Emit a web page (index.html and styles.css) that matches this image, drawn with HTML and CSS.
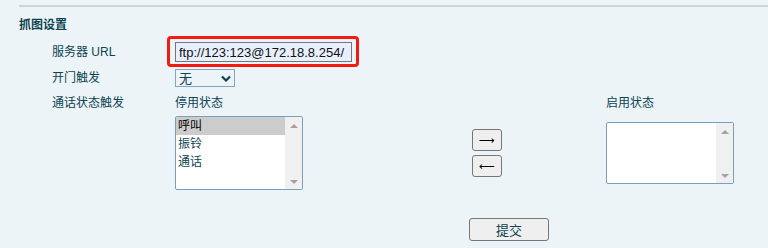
FILE: index.html
```html
<!DOCTYPE html>
<html lang="zh">
<head>
<meta charset="utf-8">
<link rel="stylesheet" href="styles.css">
</head>
<body>
<div class="section">
  <div class="topline"></div>
  <div class="title">抓图设置</div>
  <div class="form">
    <div class="row row-url">
      <div class="label">服务器 URL</div>
      <div class="ctrl">
        <span class="marked"><input class="text-input" type="text" value="ftp://123:123@172.18.8.254/"></span>
      </div>
    </div>
    <div class="row row-door">
      <div class="label">开门触发</div>
      <div class="ctrl">
        <span class="select-wrap">
          <select class="select"><option>无</option></select>
          <svg class="chev" width="10" height="7" viewBox="0 0 10 7"><path d="M1 1.5 L5 5.5 L9 1.5" fill="none" stroke="#103e52" stroke-width="2.2"/></svg>
        </span>
      </div>
    </div>
    <div class="trigger">
      <div class="label">通话状态触发</div>
      <div class="colhead">停用状态</div>
      <div></div>
      <div class="colhead">启用状态</div>

      <div></div>
      <div class="listbox lb-off">
        <div class="items">
          <div class="item sel">呼叫</div>
          <div class="item">振铃</div>
          <div class="item">通话</div>
        </div>
        <div class="sbar"><span class="up"></span><span class="down"></span></div>
      </div>
      <div class="arrows">
        <button class="btn arrow" type="button">⟶</button>
        <button class="btn arrow" type="button">⟵</button>
      </div>
      <div class="listbox lb-on">
        <div class="items"></div>
        <div class="sbar"><span class="up"></span><span class="down"></span></div>
      </div>
    </div>
    <div class="submit-row">
      <button class="btn submit" type="button">提交</button>
    </div>
  </div>
</div>
</body>
</html>
```
FILE: styles.css
```css
html, body {
  margin: 0;
  padding: 0;
}
body {
  background: #ecf4f7;
  color: #0d4352;
  font-family: "Liberation Sans", "Noto Sans CJK SC", sans-serif;
  font-size: 12px;
  width: 768px;
  height: 248px;
  overflow: hidden;
}
.section {
  padding-left: 19px;
}
.topline {
  margin-top: 5px;
  height: 2px;
  background: #d3d3d5;
}
.title {
  margin-top: 10px;
  font-weight: bold;
  line-height: 16px;
  height: 16px;
}
.form {
  padding-left: 33px;
}
.row {
  display: grid;
  grid-template-columns: 123px auto;
  align-items: center;
}
.label {
  line-height: 16px;
}
.row-url {
  margin-top: 9px;
  height: 20px;
}
.marked {
  position: relative;
  display: inline-block;
  height: 20px;
}
.marked::after {
  content: "";
  position: absolute;
  left: -8px;
  top: -6px;
  right: -7px;
  bottom: -5px;
  border: 3px solid #f21b12;
  border-radius: 4px;
  pointer-events: none;
}
.text-input {
  box-sizing: border-box;
  width: 177px;
  height: 20px;
  margin: 0;
  padding: 0 3px;
  border: 1px solid #767676;
  background: #e8f0fe;
  color: #111;
  font-family: "Liberation Sans", sans-serif;
  font-size: 13px;
  outline: none;
}
.row-door {
  margin-top: 7px;
  height: 18px;
}
.select-wrap {
  position: relative;
  display: inline-block;
  height: 18px;
}
.select {
  box-sizing: border-box;
  width: 60px;
  height: 18px;
  margin: 0;
  padding: 0 0 0 3px;
  border: 1px solid #7ea7c2;
  border-radius: 0;
  background: #ecf4f7;
  color: #0d4352;
  font-family: "Liberation Sans", "Noto Sans CJK SC", sans-serif;
  font-size: 13px;
  -webkit-appearance: none;
  appearance: none;
  display: block;
}
.chev {
  position: absolute;
  left: 46px;
  top: 6px;
  pointer-events: none;
}
.trigger {
  margin-top: 8px;
  display: grid;
  grid-template-columns: 123px 297px 134px 128px;
  grid-template-rows: 16px auto;
  row-gap: 5px;
  align-items: start;
}
.colhead {
  line-height: 16px;
}
.listbox {
  box-sizing: border-box;
  width: 128px;
  border: 1px solid #7a9fbd;
  border-radius: 2px;
  background: #fff;
  display: flex;
}
.lb-off {
  height: 74px;
}
.lb-on {
  height: 62px;
  margin-top: 6px;
}
.items {
  flex: 1;
}
.item {
  height: 18px;
  line-height: 18px;
  padding-left: 2px;
  font-size: 12px;
}
.item.sel {
  background: #cccccc;
  color: #000;
}
.sbar {
  width: 17px;
  background: #f0f0f0;
  display: flex;
  flex-direction: column;
  justify-content: space-between;
  align-items: center;
  padding: 7px 0 5px;
}
.up {
  width: 0;
  height: 0;
  border-left: 4px solid transparent;
  border-right: 4px solid transparent;
  border-bottom: 4px solid #a3a3a3;
}
.down {
  width: 0;
  height: 0;
  border-left: 4px solid transparent;
  border-right: 4px solid transparent;
  border-top: 4px solid #a3a3a3;
}
.arrows {
  margin-top: 13px;
  display: flex;
  flex-direction: column;
  gap: 4px;
}
.btn {
  box-sizing: border-box;
  margin: 0;
  padding: 0;
  border: 1px solid #767676;
  border-radius: 3px;
  background: #efefef;
  font-family: "Liberation Sans", "Noto Sans CJK SC", sans-serif;
}
.arrow {
  width: 30px;
  height: 22px;
  color: #000;
  font-family: "DejaVu Sans", sans-serif;
  font-size: 11px;
}
.submit-row {
  margin-top: 28px;
  padding-left: 417px;
}
.submit {
  width: 80px;
  height: 23px;
  color: #0d4352;
  font-size: 13px;
}
```
